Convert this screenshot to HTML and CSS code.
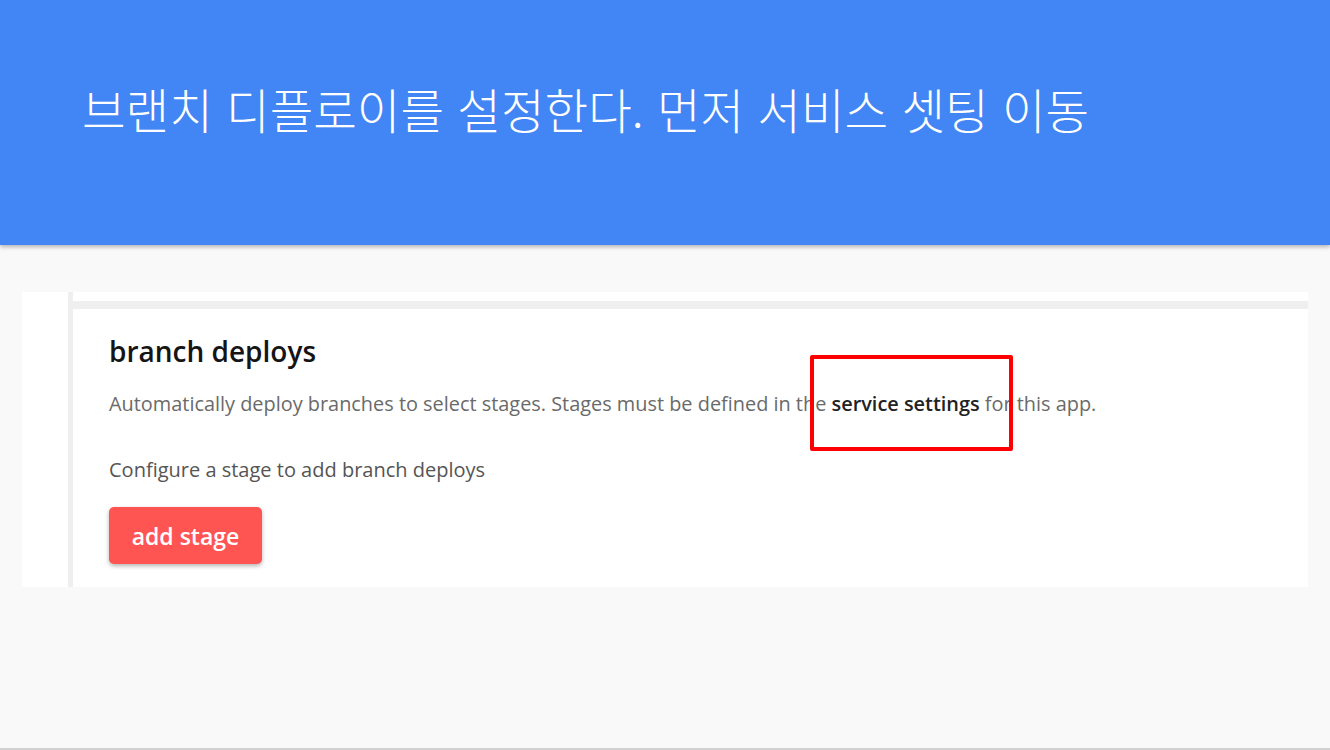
FILE: index.html
```html
<!DOCTYPE html>
<html lang="ko">
<head>
<meta charset="utf-8">
<title>branch deploys</title>
<link rel="stylesheet" href="styles.css">
</head>
<body>
<header class="banner">
  <h1 class="banner-title">브랜치 디플로이를 설정한다. 먼저 서비스 셋팅 이동</h1>
</header>
<main class="stage">
  <div class="shot">
    <div class="shot-gutter"></div>
    <div class="shot-rule"></div>
    <div class="shot-body">
      <div class="shot-topline"></div>
      <section class="panel">
        <h2 class="panel-title">branch deploys</h2>
        <p class="panel-desc">Automatically deploy branches to select stages. Stages must be defined in the <strong>service settings</strong> for this app.</p>
        <p class="panel-note">Configure a stage to add branch deploys</p>
        <button class="btn-add">add stage</button>
      </section>
    </div>
    <div class="highlight"></div>
  </div>
</main>
<footer class="bottom-line"></footer>
</body>
</html>
```

FILE: styles.css
```css
html, body {
  margin: 0;
  padding: 0;
}
body {
  width: 1330px;
  height: 750px;
  background: #f9f9f9;
  font-family: "Open Sans", "Noto Sans", sans-serif;
  display: flex;
  flex-direction: column;
  overflow: hidden;
}
.banner {
  height: 245px;
  background: #4285f4;
  box-shadow: 0 2px 4px rgba(0, 0, 0, 0.28);
  position: relative;
  z-index: 1;
  flex: none;
}
.banner-title {
  margin: 0;
  padding: 81px 0 0 82px;
  font-family: "Noto Sans CJK KR", "Noto Sans", sans-serif;
  font-weight: 300;
  font-size: 47.4px;
  line-height: 56px;
  color: #ffffff;
  letter-spacing: 0;
}
.stage {
  flex: 1;
  padding: 47px 22px 0 22px;
}
.shot {
  position: relative;
  display: flex;
  height: 295px;
  background: #ffffff;
}
.shot-gutter {
  width: 46px;
  flex: none;
}
.shot-rule {
  width: 5px;
  flex: none;
  background: #efefef;
}
.shot-body {
  flex: 1;
  display: flex;
  flex-direction: column;
}
.shot-topline {
  height: 8px;
  margin-top: 9px;
  background: #efefef;
  flex: none;
}
.panel {
  padding: 25px 0 0 36px;
}
.panel-title {
  margin: 0;
  font-size: 28px;
  font-weight: 600;
  color: #151515;
  line-height: 34px;
}
.panel-desc {
  margin: 24px 0 0 0;
  font-size: 19.9px;
  line-height: 24px;
  color: #6a6a6a;
}
.panel-desc strong {
  color: #222;
  font-weight: 600;
}
.panel-note {
  margin: 42px 0 0 0;
  font-size: 20px;
  line-height: 24px;
  color: #555;
}
.btn-add {
  margin-top: 25px;
  width: 153px;
  height: 57px;
  border: none;
  border-radius: 5px;
  background: #ff5552;
  color: #fff;
  font-family: "Open Sans", sans-serif;
  font-size: 23px;
  font-weight: 600;
  box-shadow: 0 2px 4px rgba(0, 0, 0, 0.3);
}
.highlight {
  position: absolute;
  left: 788px;
  top: 63px;
  width: 195px;
  height: 88px;
  border: 4px solid #ff0000;
  border-radius: 2px;
}
.bottom-line {
  height: 2px;
  background: #d0d0d0;
  flex: none;
}
```
